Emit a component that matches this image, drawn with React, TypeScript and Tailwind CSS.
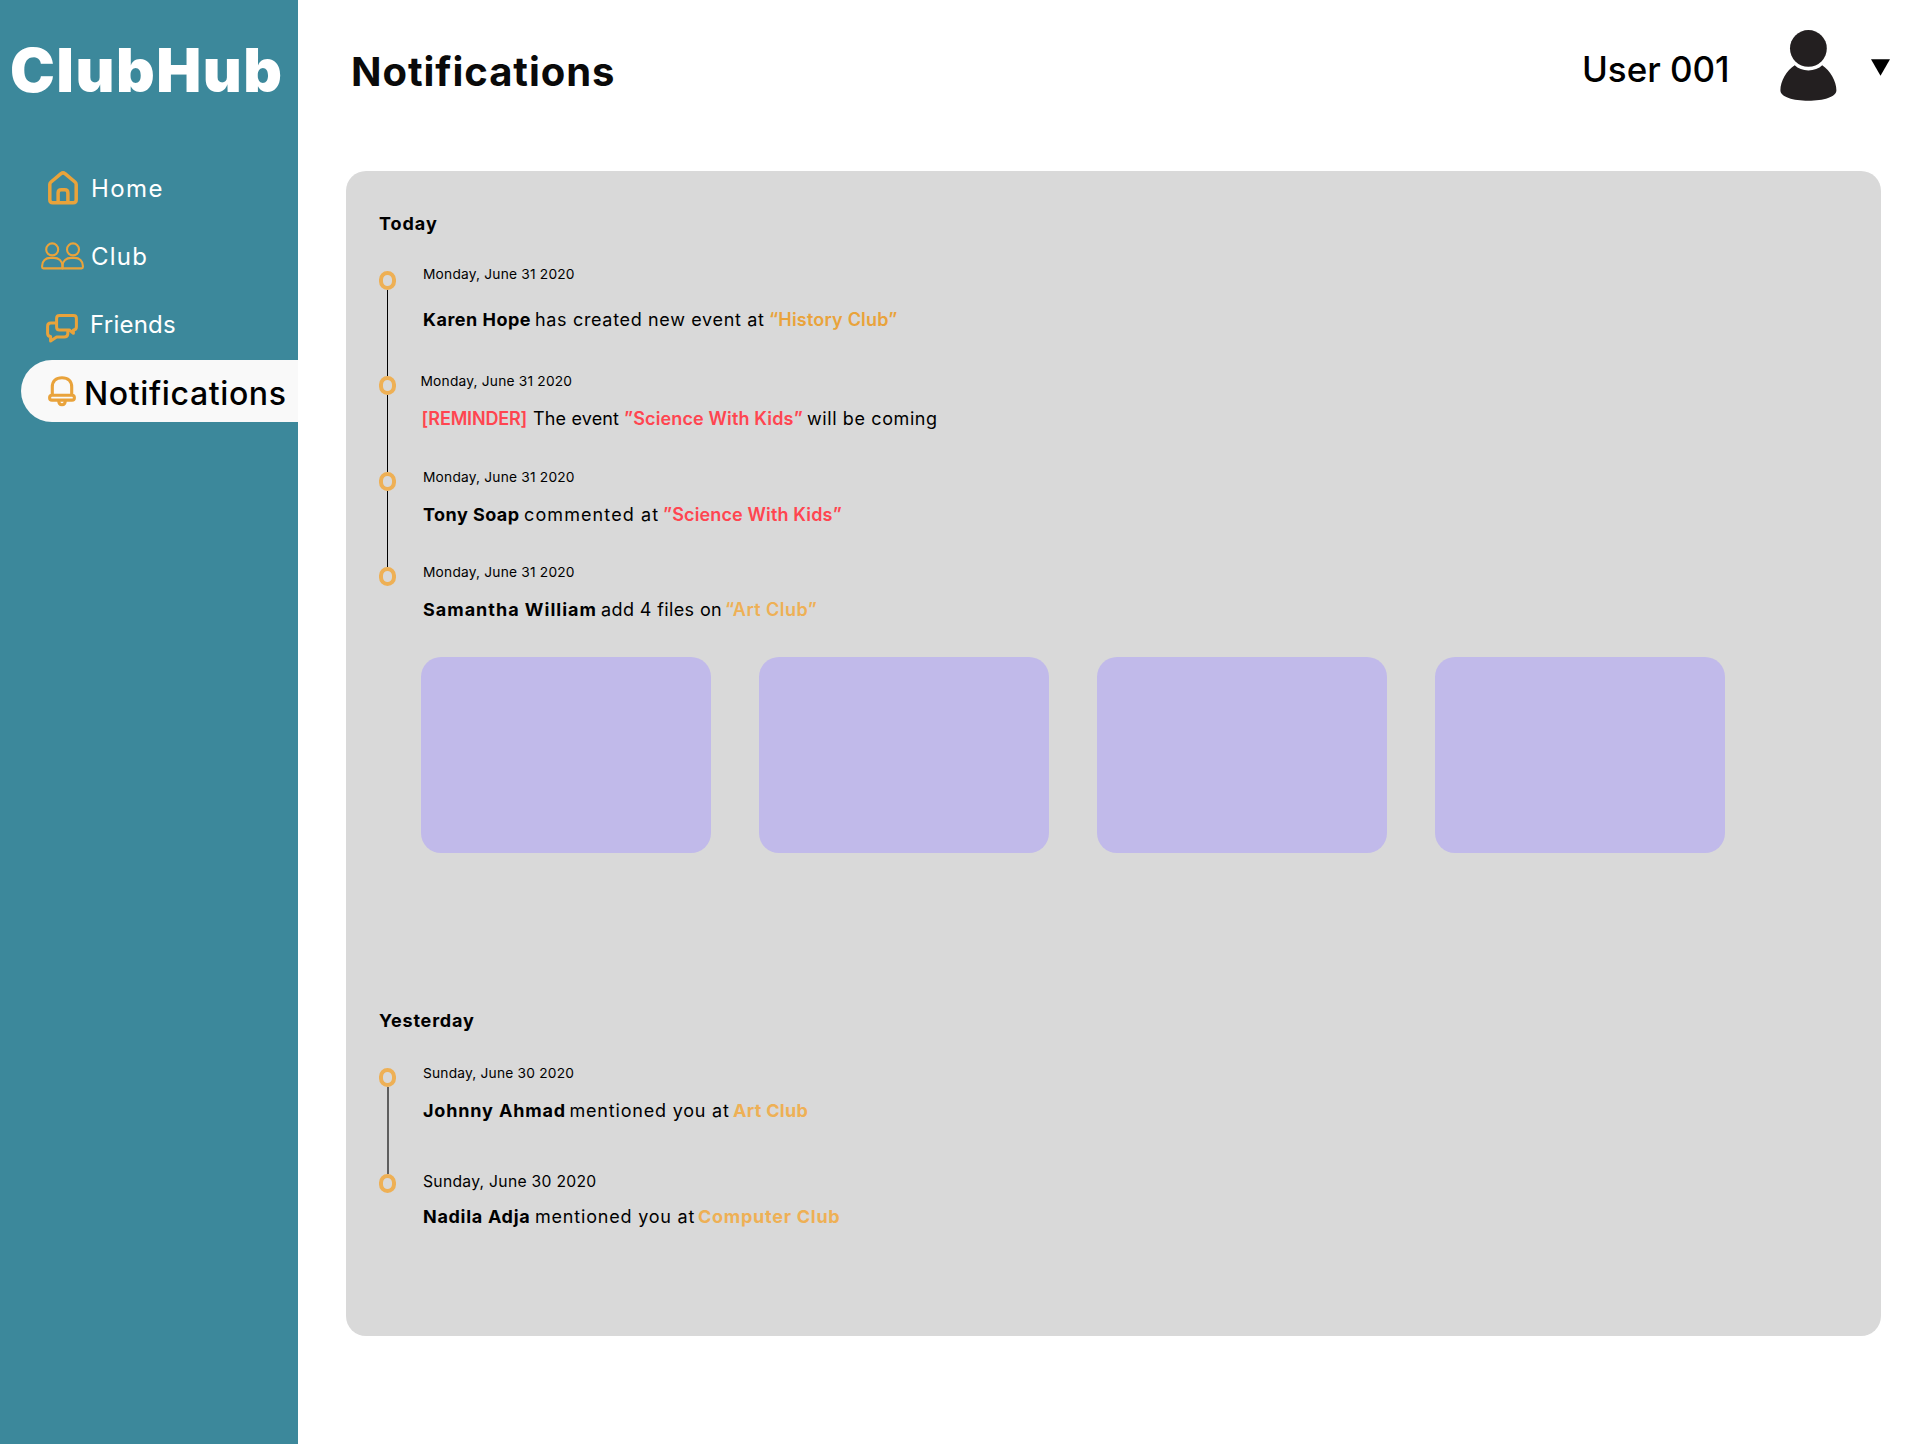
import type { ReactNode } from "react";

function HomeIcon() {
  return (
    <svg className="ml-12 h-[34px] w-[30px] shrink-0" viewBox="0 0 30 34" fill="none" stroke="#e9a33b" strokeWidth="3.5" strokeLinejoin="round">
      <path d="M1.8 13.6Q1.8 12 3 11L13 2.6Q15 1.2 17 2.6L27 11Q28.2 12 28.2 13.6V28.8Q28.2 31.8 25.2 31.8H4.8Q1.8 31.8 1.8 28.8Z" />
      <path d="M10.1 31.8V22Q10.1 18.8 13.3 18.8H16.7Q19.9 18.8 19.9 22V31.8" />
    </svg>
  );
}

function ClubIcon() {
  return (
    <svg className="ml-[41px] h-7 w-[43px] shrink-0" viewBox="0 0 43 28" fill="none" stroke="#e9a33b" strokeWidth="2.1" strokeLinejoin="round">
      <circle cx="11.2" cy="7.4" r="6" />
      <circle cx="32" cy="7.4" r="6" />
      <path d="M1.1 25V24C1.1 19 4.8 15.9 9.3 15.9H13C17.5 15.9 21.5 19 21.5 24V26.4H2.4Q1.1 26.4 1.1 25Z" />
      <path d="M21.5 26.4V24C21.5 19 25.5 15.9 30 15.9H33.7C38.2 15.9 41.9 19 41.9 24V25Q41.9 26.4 40.6 26.4Z" />
    </svg>
  );
}

function ChatIcon() {
  return (
    <svg className="mt-2 ml-[46px] h-[29px] w-8 shrink-0" viewBox="0 0 32 29" fill="none" stroke="#e9a33b" strokeWidth="3" strokeLinejoin="round">
      <path d="M13.5 1.6H27.5Q30.4 1.6 30.4 4.5V13Q30.4 15.8 27.4 16V19.3L23.4 16H13.5Q10.6 16 10.6 13V4.5Q10.6 1.6 13.5 1.6Z" />
      <path d="M10.6 9.1H4.8Q1.6 9.1 1.6 12.2V19.5Q1.6 22.3 4.6 22.6V27L10.6 23H18.3Q21.4 23 21.8 20V16.5" />
    </svg>
  );
}

function BellIcon() {
  return (
    <svg className="ml-[27px] h-[31px] w-7 shrink-0" viewBox="0 0 28 31" fill="none" stroke="#e9a33b" strokeWidth="3.1">
      <path d="M4.3 19.2V11C4.3 5 8 1.7 14 1.7S23.7 5 23.7 11V19.2" />
      <rect x="1.6" y="19.3" width="24.8" height="4.8" rx="2.4" />
      <path d="M10.7 24.3C10.7 27 12 28.8 14 28.8S17.3 27 17.3 24.3" />
    </svg>
  );
}

function UserIcon() {
  return (
    <svg className="h-[71px] w-[57px]" viewBox="0 0 57 71" fill="#231f20">
      <circle cx="28.4" cy="18.4" r="18.4" />
      <path d="M14.7 35.3C18 38.7 23 40.4 28.4 40.4S39 38.7 42.2 35.3C50 40.5 56.4 51 56.4 60.3C56.4 67 43.5 70.8 28.4 70.8S.4 67 .4 60.3C.4 51 6.6 40.5 14.7 35.3Z" />
    </svg>
  );
}

type EntryProps = {
  height: string;
  offset: string;
  date: string;
  dateClass?: string;
  gap: string;
  line?: string;
  children: ReactNode;
};

function Entry({ height, offset, date, dateClass = "text-[13.75px] tracking-[0.2px]", gap, line, children }: EntryProps) {
  return (
    <li className={`flex ${height}`}>
      <div className="flex w-11 shrink-0 flex-col">
        <span className="h-[19px] w-[17px] shrink-0 rounded-[8.5px] border-[4px] border-[#eeb055]" />
        {line && <span className={`grow ${line}`} />}
      </div>
      <div className={offset}>
        <p className={`leading-5 whitespace-nowrap ${dateClass}`}>{date}</p>
        <p className={`flex leading-6 whitespace-nowrap ${gap}`}>{children}</p>
      </div>
    </li>
  );
}

export default function App() {
  return (
    <div className="flex h-[1444px] w-[1920px] overflow-hidden bg-white font-['Inter',sans-serif] text-black">
      <aside className="flex w-[298px] shrink-0 flex-col bg-[#3c889b] text-white">
        <h1 className="pt-[34px] pl-2.5 text-[60px] leading-[72px] font-black tracking-[1.5px]">ClubHub</h1>
        <nav className="mt-12 text-2xl">
          <a className="flex h-[68px] items-center">
            <HomeIcon />
            <span className="mt-0.5 ml-[13px] tracking-[1.4px]">Home</span>
          </a>
          <a className="flex h-[68px] items-center">
            <ClubIcon />
            <span className="mt-0.5 ml-[7px] tracking-[1.2px]">Club</span>
          </a>
          <a className="flex h-[68px] items-center">
            <ChatIcon />
            <span className="mt-0.5 ml-3 tracking-[0.25px]">Friends</span>
          </a>
          <a className="mt-0.5 ml-[21px] flex h-[62px] items-center rounded-l-[31px] bg-[#f9f9f9] text-[32px] font-medium text-black">
            <BellIcon />
            <span className="mt-1.5 ml-2 tracking-[0.62px]">Notifications</span>
          </a>
        </nav>
      </aside>

      <main className="flex grow flex-col">
        <header className="flex h-[171px] items-start">
          <h2 className="mt-12 ml-[53px] text-[40px] leading-[48px] font-bold tracking-[0.95px] text-[#0a0a0a]">Notifications</h2>
          <div className="mr-[30px] ml-auto flex items-start">
            <span className="mt-[45px] w-[198px] text-[35px] leading-[48px] font-medium tracking-[-0.05px]">User 001</span>
            <span className="mt-[30px] w-[91px]">
              <UserIcon />
            </span>
            <svg className="mt-[59px] h-[17px] w-[19px]" viewBox="0 0 19 17">
              <path d="M0 .3H19L9.5 16.8Z" />
            </svg>
          </div>
        </header>

        <section className="ml-12 h-[1165px] w-[1535px] rounded-[20px] bg-[#d9d9d9] pl-[33px] text-lg">
          <h3 className="pt-[41px] leading-6 font-bold tracking-[0.95px]">Today</h3>
          <ul className="mt-[35px]">
            <Entry height="h-[105px]" offset="-mt-[7px]" date="Monday, June 31 2020" gap="mt-6" line="ml-2 w-px bg-black">
              <b className="w-28 tracking-[0.5px]">Karen Hope</b>
              <span className="w-[234px] tracking-[0.66px]">has created new event at</span>
              <span className="font-semibold tracking-[0.2px] text-[#e9a33b]">“History Club”</span>
            </Entry>
            <Entry
              height="h-24"
              offset="-mt-[5px] -ml-[1.5px]"
              date="Monday, June 31 2020"
              dateClass="-ml-px text-[13.75px] tracking-[0.2px]"
              gap="mt-4"
              line="ml-2 w-px bg-black"
            >
              <span className="w-[111.5px] font-semibold tracking-[-0.15px] text-[#ff4550]">[REMINDER]</span>
              <span className="w-[91px] tracking-[0.15px]">The event</span>
              <span className="w-[183px] font-semibold tracking-[0.15px] text-[#ff4550]">”Science With Kids”</span>
              <span className="tracking-[0.6px]">will be coming</span>
            </Entry>
            <Entry height="h-[95px]" offset="-mt-[5px]" date="Monday, June 31 2020" gap="mt-4" line="ml-2 w-px bg-black">
              <b className="w-[101px] tracking-[0.45px]">Tony Soap</b>
              <span className="w-[139px] tracking-[1.1px]">commented at</span>
              <span className="font-semibold tracking-[0.15px] text-[#ff4550]">”Science With Kids”</span>
            </Entry>
            <Entry height="h-[90.4px]" offset="-mt-[5px]" date="Monday, June 31 2020" gap="mt-4">
              <b className="w-[178px] tracking-[1px]">Samantha William</b>
              <span className="w-[124px] tracking-[0.38px]">add 4 files on</span>
              <span className="font-semibold tracking-[0.45px] text-[#eeb055]">“Art Club”</span>
            </Entry>
          </ul>

          <div className="ml-[42px] flex gap-12">
            <div className="h-[195.6px] w-[290px] rounded-[20px] bg-[#c1baea]" />
            <div className="h-[195.6px] w-[290px] rounded-[20px] bg-[#c1baea]" />
            <div className="h-[195.6px] w-[290px] rounded-[20px] bg-[#c1baea]" />
            <div className="h-[195.6px] w-[290px] rounded-[20px] bg-[#c1baea]" />
          </div>

          <h3 className="mt-[156px] leading-6 font-bold tracking-[0.8px]">Yesterday</h3>
          <ul className="mt-[35px]">
            <Entry height="h-[106px]" offset="-mt-[5px]" date="Sunday, June 30 2020" gap="mt-4" line="ml-2 w-0.5 bg-[#5f5f5f]">
              <b className="w-[146.5px] tracking-[0.85px]">Johnny Ahmad</b>
              <span className="w-[163.5px] tracking-[0.8px]">mentioned you at</span>
              <b className="tracking-[0.3px] text-[#eeb055]">Art Club</b>
            </Entry>
            <Entry height="h-24" offset="-mt-[2px]" date="Sunday, June 30 2020" dateClass="text-[15.7px] tracking-[0.28px]" gap="mt-[13px]">
              <b className="w-28 tracking-[0.7px]">Nadila Adja</b>
              <span className="w-[163px] tracking-[0.8px]">mentioned you at</span>
              <b className="tracking-[0.74px] text-[#eeb055]">Computer Club</b>
            </Entry>
          </ul>
        </section>
      </main>
    </div>
  );
}
